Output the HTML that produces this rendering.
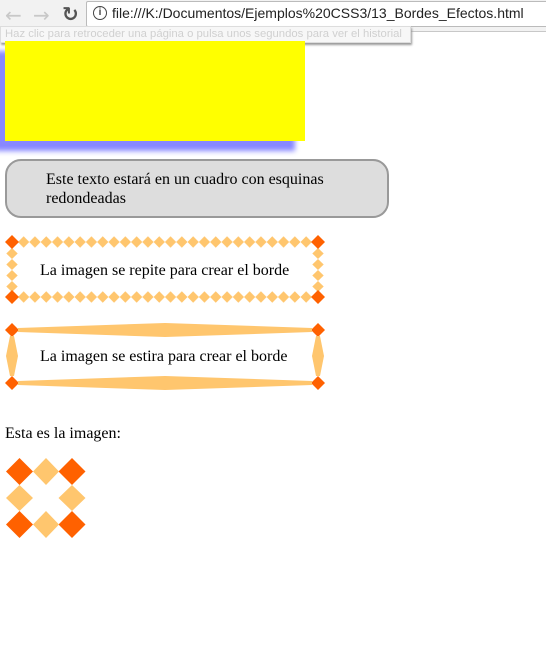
<!DOCTYPE html>
<html><head><meta charset="utf-8"><style>
body{margin:0;width:546px;height:646px;position:relative;background:#fff;font-family:"Liberation Serif",serif;font-size:16px;color:#000;overflow:hidden}
.a{position:absolute}
</style></head><body>
<div class="a" style="left:0;top:0;width:546px;height:31px;background:#f2f2f2;border-bottom:1px solid #c8c8c8"></div>
<div class="a" style="left:5px;top:3px;font:20px 'DejaVu Sans',sans-serif;color:#c8c8c8">&#8592;</div>
<div class="a" style="left:33px;top:3px;font:20px 'DejaVu Sans',sans-serif;color:#c8c8c8">&#8594;</div>
<div class="a" style="left:62px;top:2px;font:bold 20px 'DejaVu Sans',sans-serif;color:#555">&#8635;</div>
<div class="a" style="left:86px;top:1px;width:470px;height:24px;background:#fff;border:1px solid #bbb;border-radius:2px"></div>
<div class="a" style="left:93px;top:6px;width:12px;height:12px;border:1.5px solid #444;border-radius:50%;font:bold 10px 'Liberation Sans';text-align:center;line-height:12px;color:#444">i</div>
<div class="a" style="left:112px;top:5px;font:14px 'Liberation Sans',sans-serif;color:#222;white-space:nowrap">file:///K:/Documentos/Ejemplos%20CSS3/13_Bordes_Efectos.html</div>
<div class="a" style="left:0;top:26px;width:405px;height:15px;background:#f7f7f7;border:1px solid #ddd;box-shadow:1px 2px 2px #999;font:11.3px 'Liberation Sans',sans-serif;color:#d0d0d0;line-height:14px;padding-left:4px;white-space:nowrap;overflow:hidden">Haz clic para retroceder una página o pulsa unos segundos para ver el historial</div>
<div class="a" style="left:5px;top:41px;width:300px;height:100px;background:#ff0;box-shadow:-10px 10px 5px #88f"></div>
<div class="a" style="left:5px;top:159px;width:380px;height:55px;background:#ddd;border:2px solid #999;border-radius:16px"></div>
<div class="a" style="left:46px;top:170px;line-height:19px">Este texto estará en un cuadro con esquinas<br>redondeadas</div>
<svg class="a" style="left:0;top:230px" width="340" height="170">
<defs><pattern id="h" x="18" y="0" width="11.3" height="26" patternUnits="userSpaceOnUse"><path d="M0 12L5.65 6.3L11.3 12L5.65 17.7Z" fill="#ffc66e"/></pattern>
<pattern id="v" x="0" y="18" width="26" height="11" patternUnits="userSpaceOnUse"><path d="M12 0L17.7 5.5L12 11L6.3 5.5Z" fill="#ffc66e"/></pattern></defs>
<rect x="18" y="0" width="294" height="26" fill="url(#h)"/>
<g transform="translate(0,55)"><rect x="18" y="0" width="294" height="26" fill="url(#h)"/></g>
<rect x="0" y="18" width="26" height="44" fill="url(#v)"/>
<g transform="translate(306,0)"><rect x="0" y="18" width="26" height="44" fill="url(#v)"/></g>
<g fill="#ff6100"><path d="M12 5l7 7-7 7-7-7z"/><path d="M318 5l7 7-7 7-7-7z"/><path d="M12 60l7 7-7 7-7-7z"/><path d="M318 60l7 7-7 7-7-7z"/>
<path d="M12 93l7 7-7 7-7-7z"/><path d="M318 93l7 7-7 7-7-7z"/><path d="M12 146l7 7-7 7-7-7z"/><path d="M318 146l7 7-7 7-7-7z"/></g>
<g fill="#ffc66e"><path d="M18 98L165 93L312 98L312 102L165 107L18 102Z"/><path d="M18 151L165 146L312 151L312 155L165 160L18 155Z"/>
<path d="M10 106L14 106L18 126L14 146L10 146L6 126Z"/><path d="M316 106L320 106L324 126L320 146L316 146L312 126Z"/></g>
</svg>
<div class="a" style="left:40px;top:262px">La imagen se repite para crear el borde</div>
<div class="a" style="left:40px;top:348px">La imagen se estira para crear el borde</div>
<div class="a" style="left:5px;top:425px">Esta es la imagen:</div>
<svg class="a" style="left:6px;top:458px" width="80" height="80">
<g fill="#ff6100"><path d="M13.5 0L27 13.5 13.5 27 0 13.5z"/><path d="M66 0L79.5 13.5 66 27 52.5 13.5z"/><path d="M13.5 53L27 66.5 13.5 80 0 66.5z"/><path d="M66 53L79.5 66.5 66 80 52.5 66.5z"/></g>
<g fill="#ffc66e"><path d="M40 0L53 13.5 40 27 27 13.5z"/><path d="M40 53L53 66.5 40 80 27 66.5z"/><path d="M13.5 27L27 40 13.5 53 0 40z"/><path d="M66 27L79.5 40 66 53 52.5 40z"/></g>
</svg>
</body></html>
